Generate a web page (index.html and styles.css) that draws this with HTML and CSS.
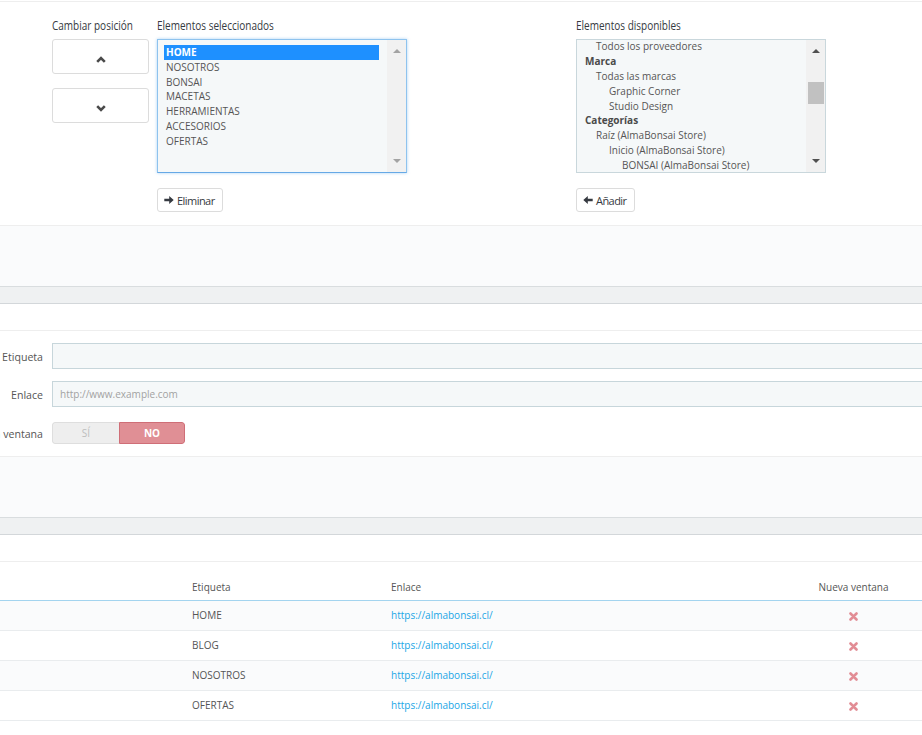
FILE: index.html
```html
<!DOCTYPE html>
<html lang="es">
<head>
<meta charset="utf-8">
<title>Menú</title>
<link rel="stylesheet" href="styles.css">
</head>
<body>
<section class="picker">
  <div class="col col-pos">
    <div class="lbl"><span>Cambiar posición</span></div>
    <button class="pos-btn" type="button">
      <svg width="10" height="7" viewBox="0 0 10 7"><polyline points="1.2,5.8 5,2 8.8,5.8" fill="none" stroke="#4a4a4a" stroke-width="2.6"/></svg>
    </button>
    <button class="pos-btn pos-down" type="button">
      <svg width="10" height="7" viewBox="0 0 10 7"><polyline points="1.2,1.2 5,5 8.8,1.2" fill="none" stroke="#4a4a4a" stroke-width="2.6"/></svg>
    </button>
  </div>
  <div class="col col-sel">
    <div class="lbl"><span>Elementos seleccionados</span></div>
    <div class="listbox focus">
      <ul class="opts">
        <li class="sel">HOME</li>
        <li>NOSOTROS</li>
        <li>BONSAI</li>
        <li>MACETAS</li>
        <li>HERRAMIENTAS</li>
        <li>ACCESORIOS</li>
        <li>OFERTAS</li>
      </ul>
      <div class="sbar off"><span class="arr-up"></span><span class="arr-down"></span></div>
    </div>
    <button class="act" type="button">
      <svg width="10" height="10" viewBox="0 0 10 10"><path d="M0.3 3.8H5.2V0.9L9.7 5L5.2 9.1V6.2H0.3Z" fill="#363a41"/></svg>
      <span>Eliminar</span>
    </button>
  </div>
  <div class="col col-avail">
    <div class="lbl"><span>Elementos disponibles</span></div>
    <div class="listbox">
      <ul class="opts scrolled">
        <li class="l1">Todos los proveedores</li>
        <li class="grp">Marca</li>
        <li class="l1">Todas las marcas</li>
        <li class="l2">Graphic Corner</li>
        <li class="l2">Studio Design</li>
        <li class="grp">Categorías</li>
        <li class="l1">Raíz (AlmaBonsai Store)</li>
        <li class="l2">Inicio (AlmaBonsai Store)</li>
        <li class="l3">BONSAI (AlmaBonsai Store)</li>
      </ul>
      <div class="sbar on"><span class="arr-up"></span><span class="thumb"></span><span class="arr-down"></span></div>
    </div>
    <button class="act" type="button">
      <svg width="10" height="10" viewBox="0 0 10 10"><path d="M9.7 3.8H4.8V0.9L0.3 5L4.8 9.1V6.2H9.7Z" fill="#363a41"/></svg>
      <span>Añadir</span>
    </button>
  </div>
</section>
<div class="pfoot"></div>
<div class="band"></div>
<div class="phead"></div>

<form class="form">
  <div class="frow r1">
    <label class="flabel">Etiqueta</label>
    <input class="finput" type="text">
  </div>
  <div class="frow r2">
    <label class="flabel">Enlace</label>
    <input class="finput" type="text" placeholder="http://www.example.com">
  </div>
  <div class="frow">
    <label class="flabel">Nueva ventana</label>
    <div class="switch"><span class="sw-yes">SÍ</span><span class="sw-no">NO</span></div>
  </div>
</form>
<div class="pfoot"></div>
<div class="band"></div>
<div class="phead"></div>

<table class="tbl">
  <colgroup><col class="c1"><col class="c2"><col class="c3"><col class="c4"></colgroup>
  <thead>
    <tr><th></th><th>Etiqueta</th><th>Enlace</th><th class="ctr">Nueva ventana</th></tr>
  </thead>
  <tbody>
    <tr class="odd"><td></td><td>HOME</td><td><a href="#">https://almabonsai.cl/</a></td><td class="ctr"><svg class="xic" width="9" height="9" viewBox="0 0 9 9"><path d="M1.5 1.5L7.5 7.5M7.5 1.5L1.5 7.5" stroke="#e28d95" stroke-width="2.6" stroke-linecap="round"/></svg></td></tr>
    <tr><td></td><td>BLOG</td><td><a href="#">https://almabonsai.cl/</a></td><td class="ctr"><svg class="xic" width="9" height="9" viewBox="0 0 9 9"><path d="M1.5 1.5L7.5 7.5M7.5 1.5L1.5 7.5" stroke="#e28d95" stroke-width="2.6" stroke-linecap="round"/></svg></td></tr>
    <tr class="odd"><td></td><td>NOSOTROS</td><td><a href="#">https://almabonsai.cl/</a></td><td class="ctr"><svg class="xic" width="9" height="9" viewBox="0 0 9 9"><path d="M1.5 1.5L7.5 7.5M7.5 1.5L1.5 7.5" stroke="#e28d95" stroke-width="2.6" stroke-linecap="round"/></svg></td></tr>
    <tr><td></td><td>OFERTAS</td><td><a href="#">https://almabonsai.cl/</a></td><td class="ctr"><svg class="xic" width="9" height="9" viewBox="0 0 9 9"><path d="M1.5 1.5L7.5 7.5M7.5 1.5L1.5 7.5" stroke="#e28d95" stroke-width="2.6" stroke-linecap="round"/></svg></td></tr>
  </tbody>
</table>
</body>
</html>
```
FILE: styles.css
```css
* { box-sizing: border-box; }

html, body {
  margin: 0;
  padding: 0;
  background: #ffffff;
  overflow: hidden;
}

body {
  width: 922px;
  height: 735px;
  font-family: "Open Sans", "Liberation Sans", sans-serif;
  color: #555555;
}

/* ---------- picker ---------- */
.picker {
  display: flex;
  margin-top: 1px;
  padding: 15px 0 13px 52px;
  border-top: 1px solid #eeeeee;
  border-bottom: 1px solid #eeeeee;
}

.col {
  display: flex;
  flex-direction: column;
  align-items: flex-start;
}

.col-pos { width: 97px; margin-right: 8px; }
.col-sel { width: 250px; margin-right: 169px; }
.col-avail { width: 250px; }

.lbl {
  height: 17px;
  margin-bottom: 5px;
  font-size: 12.5px;
  line-height: 17px;
  color: #363a41;
  white-space: nowrap;
}

.lbl span {
  display: inline-block;
  transform: scaleX(0.8);
  transform-origin: 0 50%;
}

.pos-btn {
  display: flex;
  align-items: center;
  justify-content: center;
  width: 97px;
  height: 35px;
  padding: 5px 0 0 1px;
  background: #ffffff;
  border: 1px solid #dcdcdc;
  border-radius: 3px;
}

.pos-down { margin-top: 14px; }

.listbox {
  display: flex;
  width: 250px;
  height: 134px;
  background: #f5f8f9;
  border: 1px solid #c9d7dc;
  overflow: hidden;
}

.listbox.focus {
  border-color: #8ec3ee;
  border-bottom-color: #66a9e6;
  box-shadow: 0 0 3px rgba(102, 175, 233, 0.55);
}

.opts {
  flex: 1;
  margin: 0;
  padding: 5px 8px 0 6px;
  list-style: none;
  overflow: hidden;
  font-size: 10px;
  line-height: 14.8px;
}

.opts.scrolled { padding-top: 0; margin-top: -0.7px; }

.opts li {
  padding-left: 2px;
  white-space: nowrap;
  color: #555555;
}

.opts li.sel {
  background: #1e90ff;
  color: #ffffff;
  font-weight: 700;
}

.opts li.grp { font-weight: 700; color: #4a4a4a; }
.opts li.l1 { padding-left: 13px; }
.opts li.l2 { padding-left: 26px; }
.opts li.l3 { padding-left: 39px; }

.sbar {
  display: flex;
  flex-direction: column;
  align-items: center;
  width: 19px;
  padding: 9px 0 9px;
  background: #f1f1f1;
}

.arr-up, .arr-down {
  width: 0;
  height: 0;
  border-left: 4px solid transparent;
  border-right: 4px solid transparent;
}

.arr-up { border-bottom: 4px solid #a3a3a3; }
.arr-down { border-top: 4px solid #a3a3a3; margin-top: auto; }

.sbar.on .arr-up { border-bottom-color: #505050; }
.sbar.on .arr-down { border-top-color: #505050; }

.thumb {
  width: 16px;
  height: 22px;
  margin-top: 29px;
  background: #c1c1c1;
}

.act {
  display: inline-flex;
  align-items: center;
  gap: 3px;
  height: 24px;
  margin-top: 15px;
  padding: 0 7px 0 6px;
  background: #ffffff;
  border: 1px solid #dcdcdc;
  border-radius: 3px;
  font-family: "Open Sans", sans-serif;
  font-size: 11px;
  letter-spacing: -0.55px;
  color: #363a41;
}

/* ---------- panel parts ---------- */
.pfoot {
  height: 60px;
  background: #fafbfc;
}

.band {
  height: 18px;
  background: #eff1f2;
  border-top: 1px solid #d9dddf;
  border-bottom: 1px solid #d3d7da;
}

.phead {
  height: 27px;
  border-bottom: 1px solid #eeeeee;
}

/* ---------- form ---------- */
.form {
  display: flex;
  flex-direction: column;
  margin: 0;
  padding: 12px 0 12px;
  border-bottom: 1px solid #eeeeee;
}

.frow {
  display: flex;
  align-items: center;
}

.frow.r1 { margin-bottom: 12px; }
.frow.r2 { margin-bottom: 15px; }

.flabel {
  display: flex;
  justify-content: flex-end;
  flex: 0 0 43px;
  width: 43px;
  margin-right: 9px;
  padding-top: 2px;
  overflow: hidden;
  white-space: nowrap;
  font-size: 10.6px;
  color: #555555;
}

.finput {
  flex: 1;
  min-width: 0;
  height: 26px;
  margin: 0 -30px 0 0;
  padding: 0 7px;
  background: #f5f8f9;
  border: 1px solid #c7d6db;
  border-radius: 0;
  font-family: "Open Sans", sans-serif;
  font-size: 10px;
  color: #555555;
  outline: none;
}

.finput::placeholder { color: #a2a2a2; }

.switch {
  display: flex;
  width: 133px;
  height: 22px;
  border-radius: 3px;
  overflow: hidden;
  font-size: 10px;
}

.sw-yes, .sw-no {
  display: flex;
  align-items: center;
  justify-content: center;
}

.sw-yes {
  width: 67px;
  background: #eeeeee;
  border: 1px solid #dedede;
  border-right: none;
  color: #bdbdbd;
  border-radius: 3px 0 0 3px;
}

.sw-no {
  flex: 1;
  background: #e08f95;
  border: 1px solid #cf6e77;
  border-radius: 0 3px 3px 0;
  color: #ffffff;
  font-weight: 700;
}

/* ---------- table ---------- */
.tbl {
  width: 922px;
  border-collapse: collapse;
  table-layout: fixed;
  font-size: 10px;
}

.c1 { width: 184px; }
.c2 { width: 199px; }
.c3 { width: 402px; }
.c4 { width: 137px; }

.tbl th {
  height: 38px;
  padding: 0 8px 6px;
  vertical-align: bottom;
  text-align: left;
  font-weight: 400;
  color: #555555;
  border-bottom: 1px solid #a3d4ef;
  white-space: nowrap;
}

.tbl td {
  height: 30px;
  padding: 0 8px;
  vertical-align: middle;
  border-bottom: 1px solid #e9ecee;
  color: #555555;
  white-space: nowrap;
}

.tbl tr.odd td { background: #fafbfc; }

.tbl .ctr { text-align: center; }

.tbl a {
  color: #1aa6e6;
  text-decoration: none;
}

.xic { display: inline-block; vertical-align: middle; }
```
